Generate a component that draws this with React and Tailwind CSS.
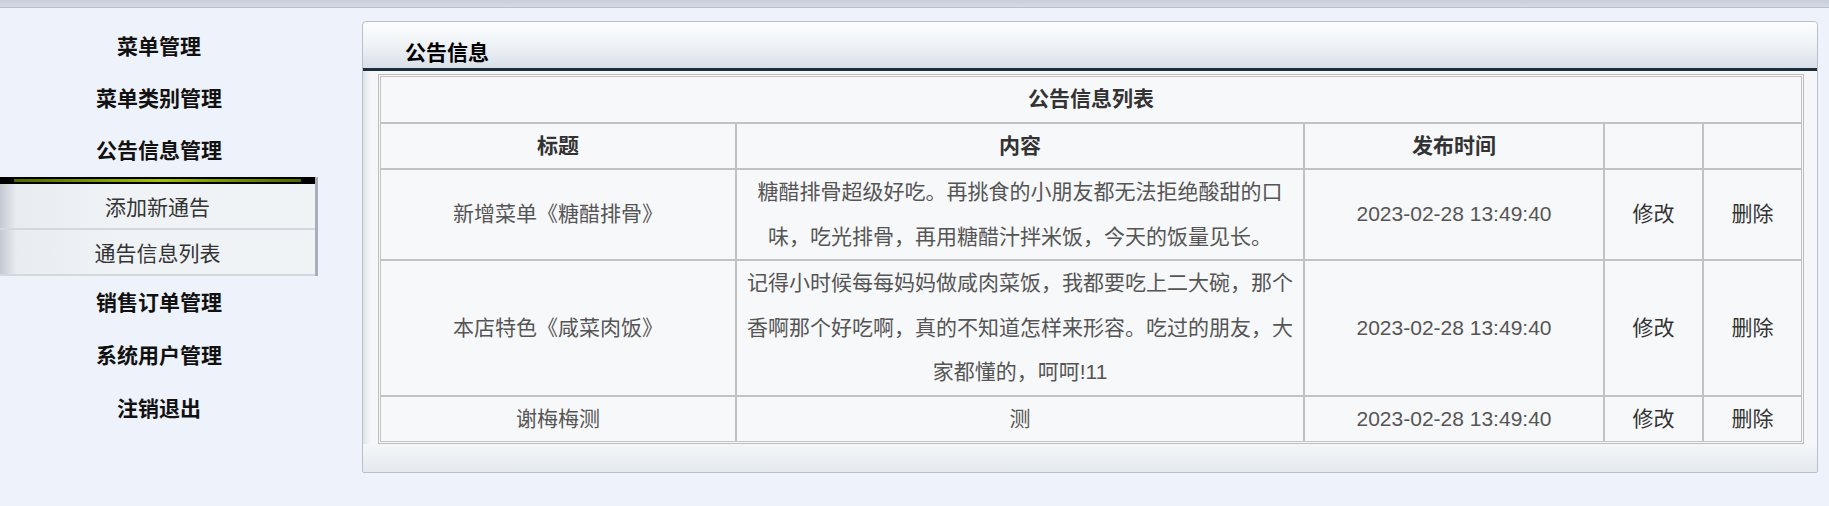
import React from "react";

const topMenu = ["菜单管理", "菜单类别管理", "公告信息管理"];
const bottomMenu = ["销售订单管理", "系统用户管理", "注销退出"];
const subMenu = ["添加新通告", "通告信息列表"];

const rows = [
  {
    title: "新增菜单《糖醋排骨》",
    content: "糖醋排骨超级好吃。再挑食的小朋友都无法拒绝酸甜的口味，吃光排骨，再用糖醋汁拌米饭，今天的饭量见长。",
    time: "2023-02-28 13:49:40",
  },
  {
    title: "本店特色《咸菜肉饭》",
    content: "记得小时候每每妈妈做咸肉菜饭，我都要吃上二大碗，那个香啊那个好吃啊，真的不知道怎样来形容。吃过的朋友，大家都懂的，呵呵!11",
    time: "2023-02-28 13:49:40",
  },
  { title: "谢梅梅测", content: "测", time: "2023-02-28 13:49:40" },
];

const Sidebar = () => {
  return (
    <aside className="w-[318px] shrink-0 pt-[13px]">
      {topMenu.map((m) => (
        <div key={m} className="h-[52px] flex items-center justify-center text-[21px] font-bold text-[#111]">
          {m}
        </div>
      ))}

      {/* 子菜单 */}
      <div className="border-r-[3px] border-[#a7b0ba]">
        <div className="h-[7px] bg-black pt-[2px] px-[14px]">
          <div className="h-[3px] bg-gradient-to-r from-[#4f6600] via-[#a2c400] to-[#4f6600]" />
        </div>
        {subMenu.map((s) => (
          <div
            key={s}
            className="h-[46px] pt-[3px] flex items-center justify-center text-[21px] text-[#333] border-b-2 border-[#d3d8de] bg-[linear-gradient(to_right,#c3c9d1_0px,#e8ecf1_16px,#f0f3f6_40%,#f0f3f6_100%)]"
          >
            {s}
          </div>
        ))}
      </div>

      {bottomMenu.map((m) => (
        <div key={m} className="h-[53px] flex items-center justify-center text-[21px] font-bold text-[#111]">
          {m}
        </div>
      ))}
    </aside>
  );
};

const Cell = ({ children, className = "", ...rest }) => (
  <td
    className={"border border-[#c2c2c2] text-center align-middle leading-[44.5px] " + className}
    {...rest}
  >
    {children}
  </td>
);

const NoticePanel = () => {
  return (
    <div className="flex-1 mt-[13px] ml-[44px] mr-[12px] border border-[#b7c0ca] rounded-t-[4px] rounded-b-[2px] bg-[#f4f6f9] shadow-[inset_6px_0_6px_-4px_#d4dbe3]">
      {/* 标题栏 */}
      <div className="h-[46px] rounded-t-[4px] bg-gradient-to-b from-[#fdfeff] via-[#eef2f6] to-[#d9e0e8] flex items-end pl-[42px] pb-[2px]">
        <span className="text-[21px] leading-[26px] font-bold text-black">公告信息</span>
      </div>
      <div className="h-[3px] bg-[#1d2d3a]" />

      <div className="pl-[15px] pr-[13px] pt-[3px]">
        <div className="border border-[#bdbdbd] p-px bg-[#f7f8fa]">
          <table className="w-full table-fixed border-separate border-spacing-0 bg-[#f7f8fa] text-[21px]">
            <colgroup>
              <col className="w-[356px]" />
              <col className="w-[568px]" />
              <col className="w-[300px]" />
              <col className="w-[99px]" />
              <col className="w-[99px]" />
            </colgroup>
            <tbody>
              <tr>
                <Cell colSpan={5} className="font-bold text-[#333]">公告信息列表</Cell>
              </tr>
              <tr className="font-bold text-[#333]">
                <Cell>标题</Cell>
                <Cell>内容</Cell>
                <Cell>发布时间</Cell>
                <Cell></Cell>
                <Cell></Cell>
              </tr>
              {rows.map((r) => (
                <tr key={r.title}>
                  <Cell className="text-[#555]">{r.title}</Cell>
                  <Cell className="text-[#555] px-[4px]">{r.content}</Cell>
                  <Cell className="text-[#555]">{r.time}</Cell>
                  <Cell className="text-[#333]">修改</Cell>
                  <Cell className="text-[#333]">删除</Cell>
                </tr>
              ))}
            </tbody>
          </table>
        </div>
      </div>

      {/* 底部 */}
      <div className="h-[28px] bg-gradient-to-b from-[#f4f6f9] to-[#e4e9ee]" />
    </div>
  );
};

const App = () => {
  return (
    <div className="min-h-screen bg-[#eef2fa] font-['Liberation_Sans','Noto_Sans_CJK_SC',sans-serif]">
      <div className="h-[8px] bg-gradient-to-b from-[#c8ced8] to-[#d5dae3] border-b border-[#b6bfcb]" />
      <div className="flex items-start">
        <Sidebar />
        <NoticePanel />
      </div>
    </div>
  );
};

export default App;
